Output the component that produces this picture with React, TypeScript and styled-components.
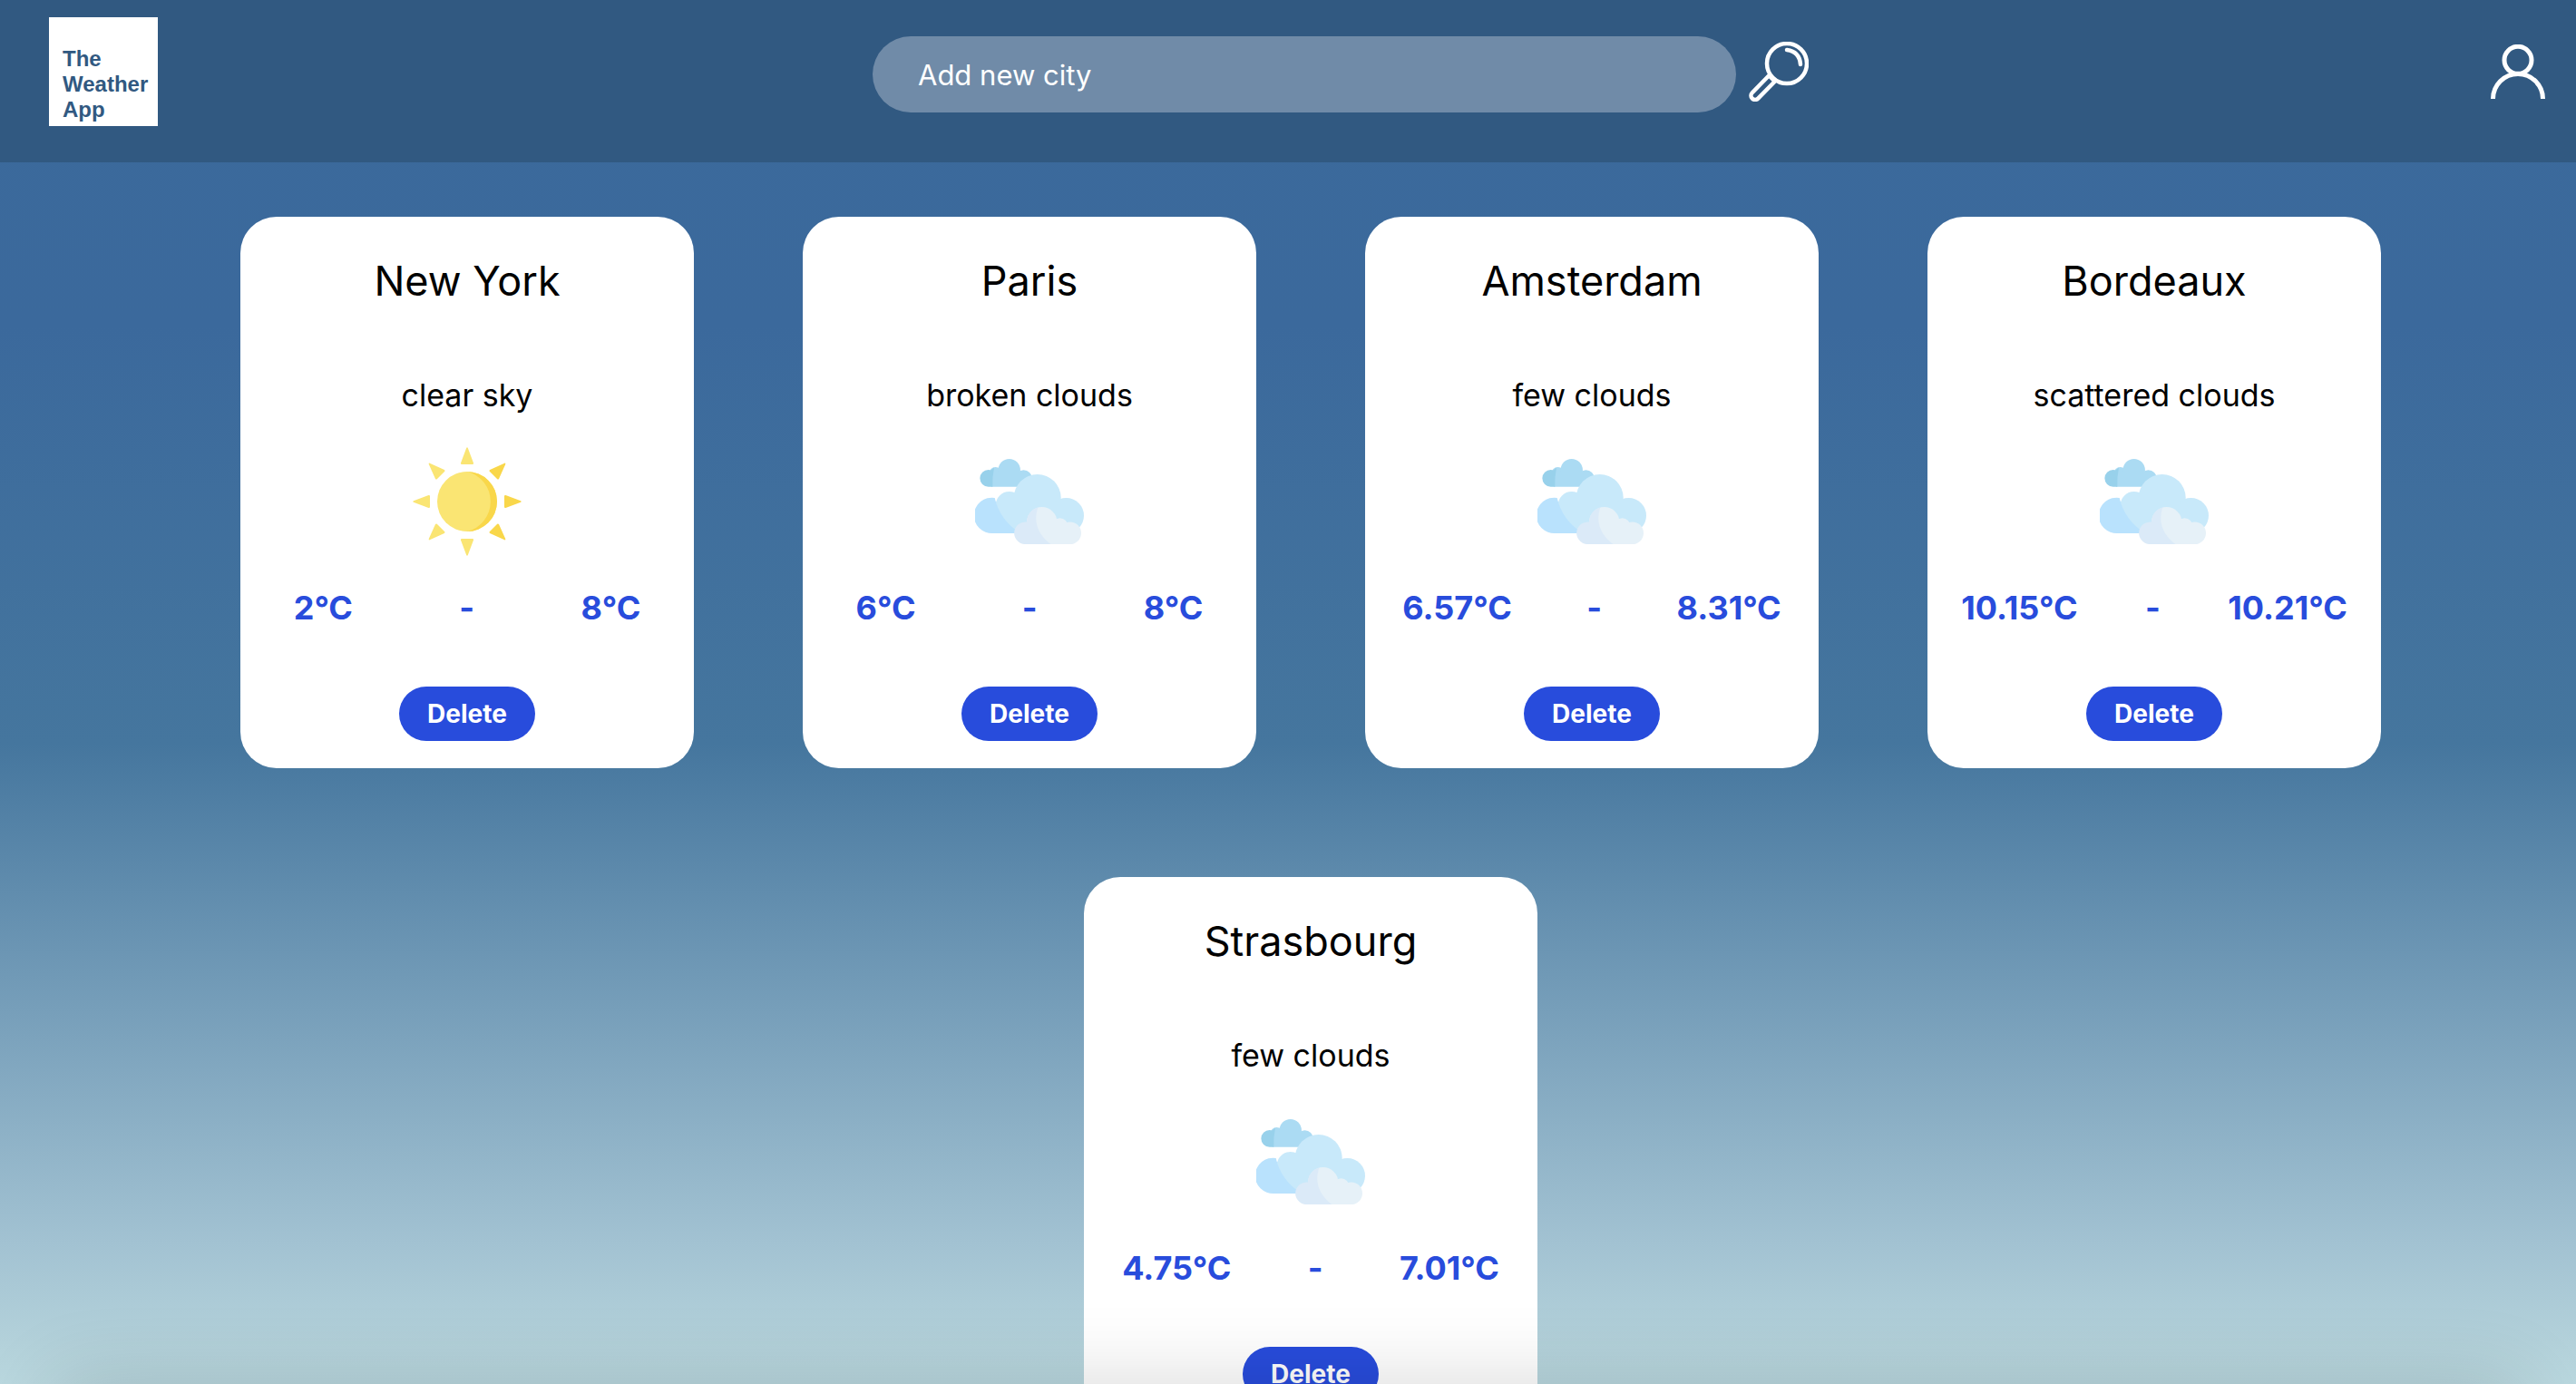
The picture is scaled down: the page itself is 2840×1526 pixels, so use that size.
import React, { useState } from "react";
import styled, { createGlobalStyle } from "styled-components";

const GlobalStyle = createGlobalStyle`
  *, *::before, *::after { box-sizing: border-box; }
  html { background: #bad8df; }
  body {
    margin: 0;
    font-family: Inter, "Liberation Sans", sans-serif;
    color: #000;
  }
  h2, p, ul { margin: 0; padding: 0; }
  button, input { font: inherit; border: 0; margin: 0; }
`;

const Page = styled.div`
  min-height: 100vh;
  background: linear-gradient(#3b6a9b 0, #3b699c 360px, #45769e 820px, #a2c2d2 1370px, #b3d1da 1480px, #bad8df 1526px);
`;

const Header = styled.header`
  display: flex;
  align-items: center;
  justify-content: space-between;
  padding: 19px 34px 40px 54px;
  background: #315981;
`;

const Logo = styled.a`
  display: flex;
  flex-direction: column;
  justify-content: flex-end;
  flex: none;
  width: 120px;
  height: 120px;
  padding: 0 0 4px 15px;
  background: #fff;
  color: #315981;
  font: bold 24px/28px "Liberation Sans", Arial, sans-serif;
  text-decoration: none;
`;

const SearchForm = styled.form`
  display: flex;
  align-items: flex-start;
  flex: 0 1 1068px;
  gap: 14px;
  padding: 6px 0 0 36px;
`;

const SearchInput = styled.input`
  flex: 1;
  min-width: 0;
  height: 84px;
  padding: 0 50px;
  border-radius: 42px;
  background: #708ba8;
  color: #fff;
  font-size: 31px;
  outline: none;
  &::placeholder { color: #fff; opacity: 1; }
`;

const IconButton = styled.button`
  display: flex;
  align-items: center;
  flex: none;
  height: 78px;
  padding: 0;
  background: none;
  color: #fff;
  cursor: pointer;
`;

const CityList = styled.ul`
  display: flex;
  flex-wrap: wrap;
  justify-content: center;
  gap: 120px;
  padding: 60px 40px 60px 90px;
  list-style: none;
`;

const Card = styled.li`
  display: flex;
  flex-direction: column;
  align-items: center;
  width: 500px;
  padding: 41px 0 30px;
  border-radius: 40px;
  background: #fff;
`;

const CityName = styled.h2`
  font-size: 45px;
  line-height: 60px;
  font-weight: 400;
`;

const Description = styled.p`
  margin: 74px 0 35px;
  font-size: 34px;
  line-height: 44px;
`;

const Temperatures = styled.div`
  display: flex;
  justify-content: space-around;
  align-self: stretch;
  margin: 35px 0 65px;
  color: #284cdc;
  font-size: 36px;
  line-height: 44px;
  font-weight: 700;
`;

const DeleteButton = styled.button`
  width: 150px;
  height: 60px;
  padding: 0;
  border-radius: 30px;
  background: #284cdc;
  color: #fff;
  font-size: 28px;
  font-weight: 700;
  cursor: pointer;
`;

const BottomShade = styled.div`
  position: fixed;
  top: 100vh;
  left: 60px;
  right: 60px;
  height: 100px;
  box-shadow: 0 0 90px rgba(0, 0, 0, 0.16);
  pointer-events: none;
`;

const SearchIcon = () => (
  <svg width="66" height="66" viewBox="0 0 66 66" fill="none" stroke="currentColor" aria-hidden="true">
    <circle cx="42" cy="24" r="22" strokeWidth="4.500" />
    <path d="M42 9Q56 11 57 25" strokeWidth="4.500" strokeLinecap="round" />
    <path d="M23.500 36L3.800 56.200A4.500 4.500 0 0 0 10.200 62.600L30 42.500" strokeWidth="4.500" strokeLinejoin="round" />
    <path d="M22 37L29 44" strokeWidth="4.500" />
  </svg>
);

const UserIcon = () => (
  <svg width="60" height="60" viewBox="0 0 60 60" fill="none" stroke="currentColor" strokeWidth="5" aria-hidden="true">
    <circle cx="30" cy="17.300" r="15" />
    <path d="M2.500 60A27.500 27.500 0 0 1 57.500 60" />
  </svg>
);

const RAY = "M59 1.500Q60 -1 61 1.500L67 17.500Q67.200 19 66 19L54 19Q52.800 19 53 17.500Z";

const SunIcon = () => (
  <svg width="120" height="120" viewBox="0 0 120 120" role="img" aria-label="Sun">
    {[0, 45, 90, 135, 180, 225, 270, 315].map((angle) => (
      <path
        key={angle}
        d={RAY}
        transform={`rotate(${angle} 60 60)`}
        fill={angle > 0 && angle < 180 ? "#f9d74a" : "#fae573"}
      />
    ))}
    <circle cx="60" cy="60" r="33" fill="#fae573" />
    <path d="M60 27A33 33 0 0 1 60 93A34 34 0 0 0 60 27Z" fill="#f9d74a" />
  </svg>
);

const CloudIcon = () => (
  <svg width="120" height="120" viewBox="0 0 120 120" role="img" aria-label="Clouds">
    <g fill="#abdbf3">
      <circle cx="22.500" cy="29" r="7" />
      <circle cx="37.700" cy="25.200" r="12.200" />
      <circle cx="53.500" cy="34.500" r="9.300" />
      <path d="M18 27H54V43.700H18Z" />
    </g>
    <path d="M21 22.400L17.500 25.400Q16.200 25 14.700 25A9.350 9.350 0 0 0 14.700 43.700H19.300Q18.800 33 21 22.400Z" fill="#98d1eb" />
    <g fill="#c8e9fa">
      <circle cx="37.700" cy="64" r="15" />
      <circle cx="68.700" cy="56" r="26" />
      <circle cx="100.500" cy="75.500" r="19.500" />
      <path d="M20 60H101V95H20Z" />
    </g>
    <path d="M21.700 55.900A19.700 19.700 0 1 0 19.700 95H50Q27 80 21.700 55.900Z" fill="#b9e2fd" />
    <g fill="#e6f1f8">
      <circle cx="73.700" cy="82.700" r="16.700" />
      <circle cx="93.500" cy="87.300" r="9" />
      <circle cx="104.700" cy="94.700" r="12.300" />
      <path d="M70 84H98V95H104V107H70Z" />
    </g>
    <path d="M69.300 66.600A16.700 16.700 0 0 0 57 82.500A12.300 12.300 0 0 0 54 107H83.500C71 98 63.500 84 69.300 66.600Z" fill="#dbeaf8" />
  </svg>
);

type City = { name: string; description: string; min: number; max: number };

const INITIAL_CITIES: City[] = [
  { name: "New York", description: "clear sky", min: 2, max: 8 },
  { name: "Paris", description: "broken clouds", min: 6, max: 8 },
  { name: "Amsterdam", description: "few clouds", min: 6.57, max: 8.31 },
  { name: "Bordeaux", description: "scattered clouds", min: 10.15, max: 10.21 },
  { name: "Strasbourg", description: "few clouds", min: 4.75, max: 7.01 },
];

export default function App() {
  const [cities, setCities] = useState(INITIAL_CITIES);

  return (
    <Page>
      <GlobalStyle />
      <Header>
        <Logo href="#">
          <span>The</span>
          <span>Weather</span>
          <span>App</span>
        </Logo>
        <SearchForm onSubmit={(event) => event.preventDefault()}>
          <SearchInput type="text" placeholder="Add new city" aria-label="Add new city" />
          <IconButton type="submit" aria-label="Search">
            <SearchIcon />
          </IconButton>
        </SearchForm>
        <IconButton type="button" aria-label="Account">
          <UserIcon />
        </IconButton>
      </Header>
      <main>
        <CityList>
          {cities.map((city) => (
            <Card key={city.name}>
              <CityName>{city.name}</CityName>
              <Description>{city.description}</Description>
              {city.description === "clear sky" ? <SunIcon /> : <CloudIcon />}
              <Temperatures>
                <span>{city.min}°C</span>
                <span>-</span>
                <span>{city.max}°C</span>
              </Temperatures>
              <DeleteButton
                type="button"
                onClick={() => setCities(cities.filter((item) => item.name !== city.name))}
              >
                Delete
              </DeleteButton>
            </Card>
          ))}
        </CityList>
      </main>
      <BottomShade />
    </Page>
  );
}
